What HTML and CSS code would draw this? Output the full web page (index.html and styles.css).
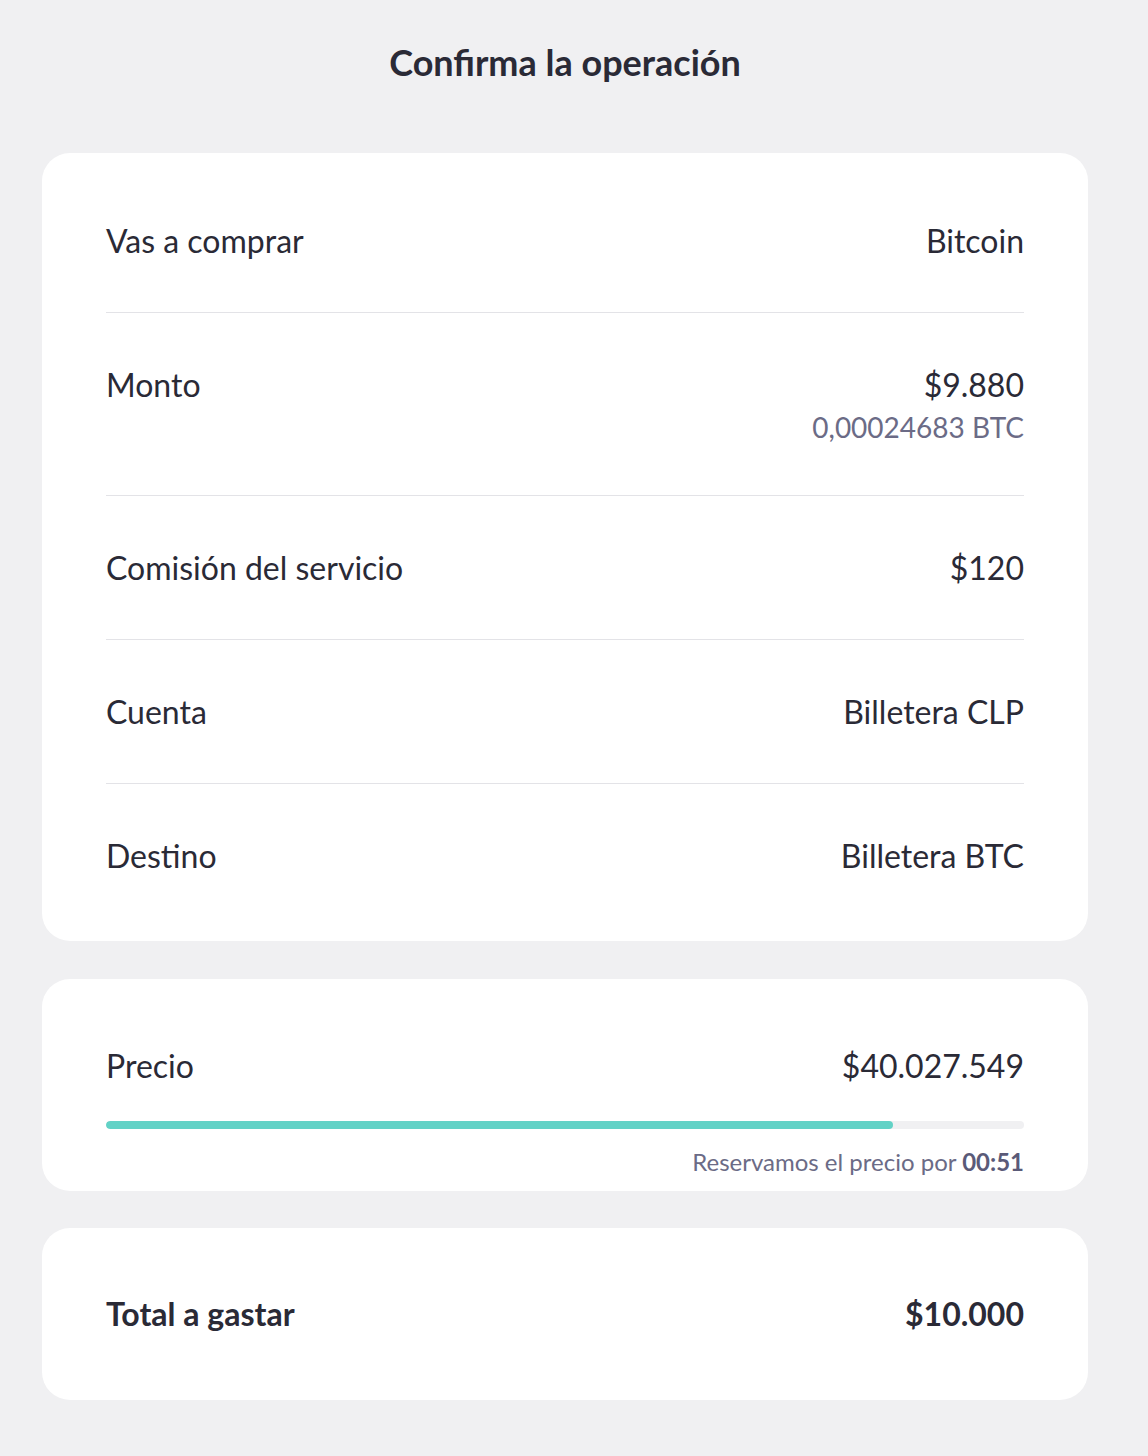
FILE: index.html
```html
<!DOCTYPE html>
<html lang="es">
<head>
<meta charset="utf-8">
<title>Confirma la operación</title>
<link rel="stylesheet" href="styles.css">
</head>
<body>
<main class="page">
  <h1 class="title">Confirma la operación</h1>

  <section class="card card-details">
    <div class="row">
      <span class="label">Vas a comprar</span>
      <span class="value">Bitcoin</span>
    </div>
    <div class="row">
      <span class="label">Monto</span>
      <div class="value-stack">
        <span class="value">$9.880</span>
        <span class="sub">0,00024683 BTC</span>
      </div>
    </div>
    <div class="row">
      <span class="label">Comisión del servicio</span>
      <span class="value">$120</span>
    </div>
    <div class="row">
      <span class="label">Cuenta</span>
      <span class="value">Billetera CLP</span>
    </div>
    <div class="row">
      <span class="label">Destino</span>
      <span class="value">Billetera BTC</span>
    </div>
  </section>

  <section class="card card-price">
    <div class="price-line">
      <span class="label">Precio</span>
      <span class="value">$40.027.549</span>
    </div>
    <div class="bar"><div class="bar-fill" style="width: 85.7%"></div></div>
    <p class="timer">Reservamos el precio por <strong>00:51</strong></p>
  </section>

  <section class="card card-total">
    <span class="label strong">Total a gastar</span>
    <span class="value strong">$10.000</span>
  </section>
</main>
</body>
</html>
```

FILE: styles.css
```css
* { box-sizing: border-box; }

html, body {
  margin: 0;
  padding: 0;
  background: #f0f0f2;
}

body {
  font-family: Lato, "Open Sans", "Liberation Sans", sans-serif;
  color: #2a2a36;
}

.page {
  padding: 40px 60px 56px 42px;
  display: flex;
  flex-direction: column;
}

.title {
  margin: 0 0 69px;
  text-align: center;
  font-size: 36px;
  font-weight: 700;
  line-height: 44px;
  color: #2a2a36;
}

.card {
  background: #ffffff;
  border-radius: 28px;
  padding: 0 64px;
}

.card-details {
  padding-top: 16px;
  padding-bottom: 14px;
}

.row {
  display: flex;
  justify-content: space-between;
  align-items: flex-start;
  padding: 53px 0 52px;
  border-bottom: 1px solid #e3e3e7;
}

.row:last-child {
  border-bottom: none;
}

.label, .value {
  font-size: 32px;
  line-height: 38px;
  color: #2a2a36;
}

.value-stack {
  display: flex;
  flex-direction: column;
  align-items: flex-end;
}

.sub {
  margin-top: 8px;
  margin-bottom: 1px;
  font-size: 28px;
  line-height: 30px;
  color: #6b6b86;
}

.card-price {
  margin-top: 38px;
  padding-top: 68px;
  padding-bottom: 15px;
}

.price-line {
  display: flex;
  justify-content: space-between;
}

.bar {
  margin-top: 36px;
  height: 8px;
  border-radius: 4px;
  background: #f0f0f2;
  overflow: hidden;
}

.bar-fill {
  height: 100%;
  border-radius: 4px;
  background: #62d2c6;
}

.timer {
  margin: 19px 0 0;
  text-align: right;
  font-size: 24px;
  line-height: 28px;
  color: #6b6b86;
}

.timer strong {
  font-weight: 700;
  color: #5a5a78;
}

.card-total {
  margin-top: 37px;
  display: flex;
  justify-content: space-between;
  align-items: center;
  height: 172px;
}

.strong {
  font-weight: 700;
}
```
